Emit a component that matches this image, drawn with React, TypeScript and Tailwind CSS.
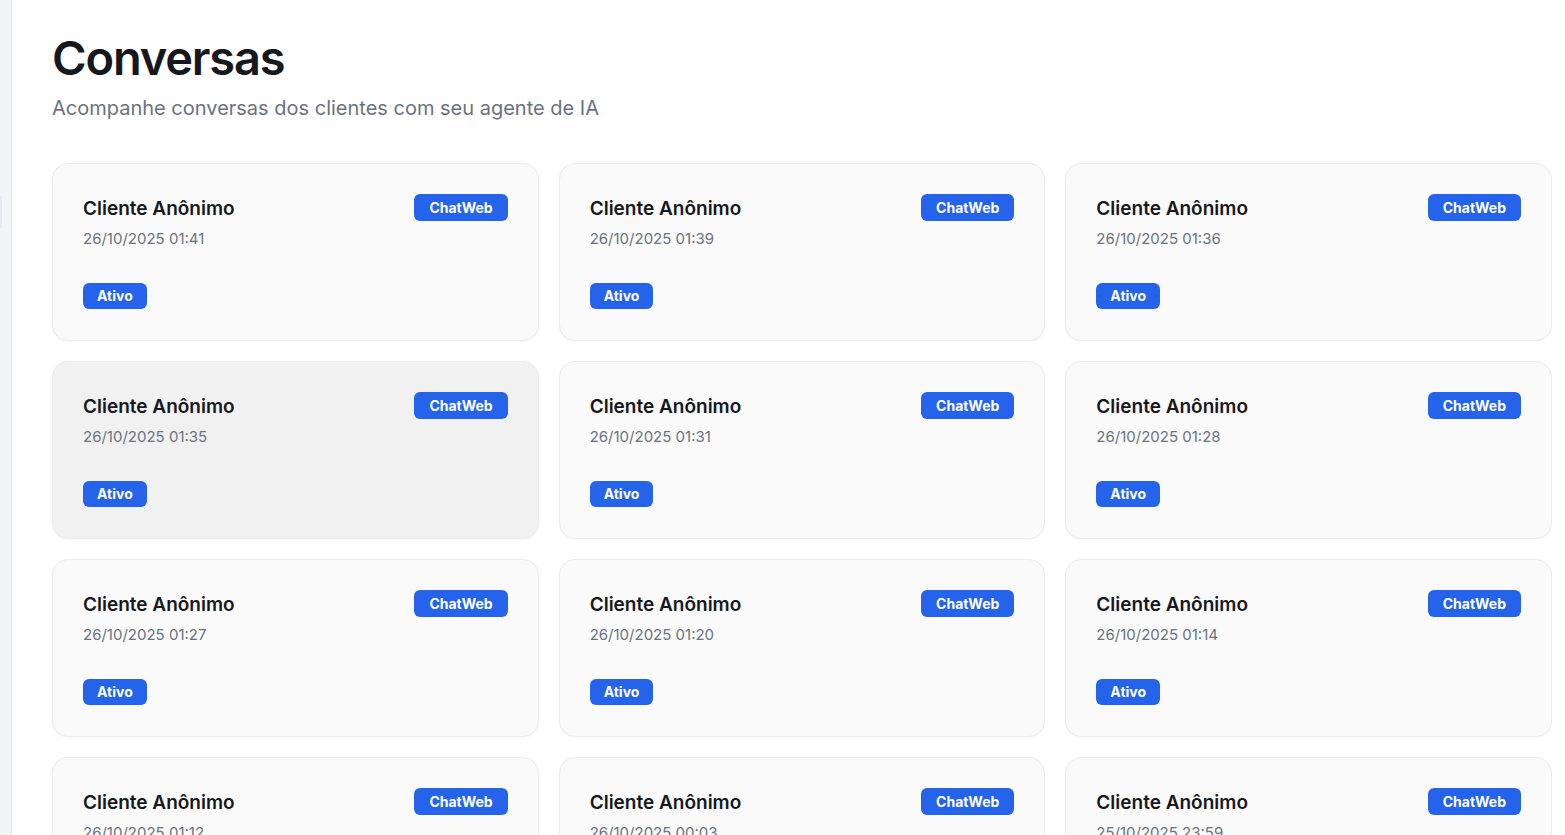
const conversations = [
  { date: "26/10/2025 01:41" },
  { date: "26/10/2025 01:39" },
  { date: "26/10/2025 01:36" },
  { date: "26/10/2025 01:35", hover: true },
  { date: "26/10/2025 01:31" },
  { date: "26/10/2025 01:28" },
  { date: "26/10/2025 01:27" },
  { date: "26/10/2025 01:20" },
  { date: "26/10/2025 01:14" },
  { date: "26/10/2025 01:12" },
  { date: "26/10/2025 00:03" },
  { date: "25/10/2025 23:59" },
];

export default function App() {
  return (
    <div
      className="flex h-[835px] overflow-hidden bg-white text-gray-900"
      style={{ fontFamily: "Inter, 'Noto Sans', sans-serif" }}
    >
      {/* Collapsed sidebar */}
      <div className="w-3 shrink-0 bg-[#f3f4f6] border-r border-[#e5e7eb] flex flex-col">
        <div className="mt-[196px] h-8 w-[2px] bg-[#e8e9ec]" />
      </div>

      {/* Main content */}
      <main className="flex-1 pl-10 pt-[34px]">
        <h1 className="text-[47px] leading-[48px] font-semibold tracking-tight text-[#16181d]">
          Conversas
        </h1>
        <p className="mt-3 text-xl text-gray-500">
          Acompanhe conversas dos clientes com seu agente de IA
        </p>

        <div className="mt-[41px] grid w-[1500px] grid-cols-3 gap-5">
          {conversations.map((c, i) => (
            <div
              key={i}
              className={`${
                c.hover ? "bg-[#f1f1f2]" : "bg-[#fafafa]"
              } rounded-2xl border border-[#ececee] shadow-[0_1px_2px_rgba(0,0,0,0.04)] px-[30px] pt-[30px] pb-[31px] flex flex-col`}
            >
              <div className="flex items-start justify-between">
                <div className="pt-px">
                  <h3 className="text-[19px] font-semibold leading-7 text-[#16181d]">
                    Cliente Anônimo
                  </h3>
                  <p className="mt-[5px] text-[15px] leading-[22px] text-gray-500">
                    {c.date}
                  </p>
                </div>
                <span className="rounded-md bg-[#2563eb] px-[15px] py-[4px] text-sm font-bold leading-[19px] text-white">
                  ChatWeb
                </span>
              </div>
              <div className="mt-[33px]">
                <span className="inline-block rounded-md bg-[#2563eb] px-[14px] py-[4px] text-sm font-bold leading-[18px] text-white">
                  Ativo
                </span>
              </div>
            </div>
          ))}
        </div>
      </main>
    </div>
  );
}
